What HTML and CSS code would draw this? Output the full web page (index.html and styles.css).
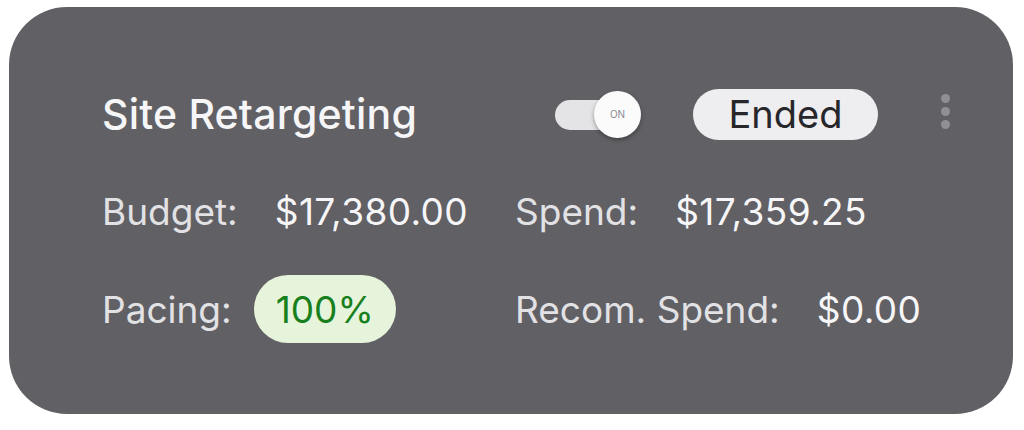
FILE: index.html
```html
<!DOCTYPE html>
<html lang="en">
<head>
  <meta charset="UTF-8">
  <meta name="viewport" content="width=device-width, initial-scale=1.0">
  <title>Campaign Card</title>
  <link rel="stylesheet" href="styles.css">
</head>
<body>

  <div class="card">
    <div class="card-header">
      <h2 class="card-title">Site Retargeting</h2>
      <div class="toggle">
        <span class="toggle-track"></span>
        <span class="toggle-knob">ON</span>
      </div>
      <span class="status">Ended</span>
      <span class="more">
        <i></i><i></i><i></i>
      </span>
    </div>

    <div class="stats">
      <div class="stat">
        <span class="stat-label">Budget:</span>
        <span class="stat-value">$17,380.00</span>
      </div>
      <div class="stat">
        <span class="stat-label">Spend:</span>
        <span class="stat-value">$17,359.25</span>
      </div>
      <div class="stat">
        <span class="stat-label">Pacing:</span>
        <span class="pacing">100%</span>
      </div>
      <div class="stat">
        <span class="stat-label">Recom. Spend:</span>
        <span class="stat-value">$0.00</span>
      </div>
    </div>
  </div>

</body>
</html>
```

FILE: styles.css
```css
body {
  font-family: Inter, "Noto Sans", sans-serif;
  margin: 0;
  background-color: #fff;
}

.card {
  box-sizing: border-box;
  width: 1004px;
  height: 407px;
  margin: 7px 0 0 9px;
  padding: 80px 63px 0 93px;
  background-color: #616065;
  border-radius: 58px;
  color: #f2f2f4;
}

.card-header {
  display: flex;
  align-items: center;
  height: 54px;
}

.card-title {
  flex-grow: 1;
  margin: 0;
  font-size: 41px;
  font-weight: 500;
  letter-spacing: 0.2px;
  color: #f6f6f8;
}

.toggle {
  position: relative;
  width: 86px;
  height: 47px;
  margin-right: 52px;
}

.toggle-track {
  position: absolute;
  left: 0;
  top: 9px;
  width: 70px;
  height: 30px;
  border-radius: 15px;
  background-color: #e4e4e7;
}

.toggle-knob {
  position: absolute;
  left: 39px;
  top: 0;
  width: 47px;
  height: 47px;
  border-radius: 50%;
  background-color: #fbfbfc;
  box-shadow: 0 2px 4px rgba(0, 0, 0, 0.35);
  display: flex;
  align-items: center;
  justify-content: center;
  font-size: 10px;
  color: #8a8a8e;
}

.status {
  box-sizing: border-box;
  width: 185px;
  height: 51px;
  border-radius: 26px;
  background-color: #eeeef1;
  color: #26262b;
  font-size: 38px;
  display: flex;
  align-items: center;
  justify-content: center;
  margin-right: 63px;
}

.more {
  display: flex;
  flex-direction: column;
  gap: 4px;
  margin-top: -6px;
}

.more i {
  width: 9px;
  height: 9px;
  border-radius: 50%;
  background-color: #909094;
}

.stats {
  display: grid;
  grid-template-columns: 413px auto;
  row-gap: 30px;
  margin-top: 36px;
}

.stat {
  display: flex;
  align-items: center;
  gap: 37px;
  height: 68px;
  font-size: 37px;
}

.stat-label {
  color: #e2e2e5;
}

.stat-value {
  color: #f6f6f8;
  letter-spacing: 0.4px;
}

.pacing {
  margin-left: -15px;
  padding: 0 22px;
  height: 68px;
  border-radius: 34px;
  background-color: #e7f4dc;
  color: #17801d;
  display: flex;
  align-items: center;
}
```
